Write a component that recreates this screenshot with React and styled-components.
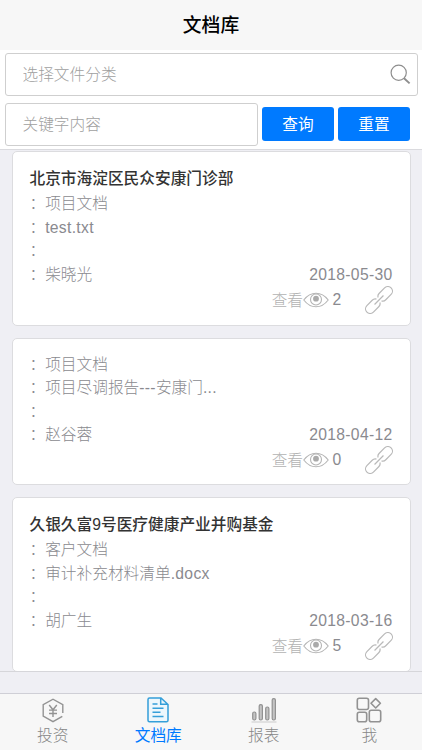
import React from 'react';
import styled, { createGlobalStyle } from 'styled-components';

const GlobalStyle = createGlobalStyle`
  * {
    box-sizing: border-box;
  }

  body {
    margin: 0;
    font-family: "Liberation Sans", "Noto Sans CJK SC", sans-serif;
    font-size: 15.7px;
    color: #8a8a8f;
    background: #efeff4;
  }
`;

const Page = styled.div`
  width: 100%;
  height: 750px;
  display: flex;
  flex-direction: column;
  overflow: hidden;
`;

const Header = styled.header`
  height: 50px;
  flex-shrink: 0;
  background: #f7f7f7;
  color: #000;
  font-size: 18.8px;
  font-weight: 500;
  line-height: 52px;
  text-align: center;
`;

const SearchForm = styled.form`
  height: 100px;
  flex-shrink: 0;
  display: flex;
  flex-direction: column;
  gap: 6.5px;
  padding: 3px 4px 0 5px;
  background: #fff;
  border-bottom: 1px solid #dadade;
`;

const FieldRow = styled.div`
  display: flex;
  align-items: center;
`;

const Field = styled.label`
  width: ${(props) => props.$width};
  height: 43px;
  display: flex;
  align-items: center;
  padding: 1px 6px 0 16.5px;
  border: 1px solid #cfcfcf;
  border-radius: 3px;
  background: #fff;
`;

const Input = styled.input`
  flex: 1;
  min-width: 0;
  padding: 0;
  border: 0;
  outline: 0;
  background: transparent;
  font: inherit;
  font-weight: 300;

  &::placeholder {
    color: #a0a0a0;
    opacity: 1;
  }
`;

const Button = styled.button`
  width: 72px;
  height: 34px;
  margin-left: 4px;
  padding: 0 0 1px;
  border: 0;
  border-radius: 3px;
  background: #007aff;
  color: #fff;
  font: inherit;
`;

const List = styled.main`
  height: 522px;
  flex-shrink: 0;
  display: flex;
  flex-direction: column;
  gap: 12px;
  padding: 1px 11.5px 0 11.5px;
  border-bottom: 1px solid #d6d6da;
  overflow: hidden;
`;

const Card = styled.article`
  flex-shrink: 0;
  height: ${(props) => (props.$titled ? '174.5px' : '147.5px')};
  padding: 14px 17px 0;
  border: 1px solid #dcdcdf;
  border-radius: 5px;
  background: #fff;
`;

const CardTitle = styled.h2`
  margin: 0;
  height: 26.2px;
  line-height: 26px;
  font-size: 15.7px;
  font-weight: 500;
  color: #333;
`;

const CardLine = styled.div`
  height: 23.6px;
  display: flex;
  justify-content: space-between;
  line-height: 23.6px;
  font-weight: 300;
`;

const Latin = styled.span`
  letter-spacing: 0.3px;
`;

const CardFooter = styled.div`
  height: 26px;
  display: flex;
  align-items: center;
  justify-content: flex-end;
  color: #b2b2b2;
  font-weight: 300;

  svg {
    flex-shrink: 0;
  }
`;

const Views = styled.span`
  width: 35.5px;
  padding: 1px 0 0 3.5px;
  color: #8a8a8f;
`;

const TabBar = styled.nav`
  height: 57px;
  margin-top: auto;
  flex-shrink: 0;
  display: flex;
  border-top: 1px solid #cfcfd6;
  background: #f7f7f7;
`;

const Tab = styled.a`
  flex: 1;
  display: flex;
  flex-direction: column;
  align-items: center;
  padding-top: 2px;
  color: ${(props) => (props.$active ? '#007aff' : '#878787')};
  line-height: 24px;
  font-weight: ${(props) => (props.$active ? 400 : 300)};
`;

const documents = [
  {
    title: '北京市海淀区民众安康门诊部',
    type: '项目文档',
    file: 'test.txt',
    author: '柴晓光',
    date: '2018-05-30',
    views: 2,
  },
  {
    type: '项目文档',
    file: '项目尽调报告---安康门...',
    author: '赵谷蓉',
    date: '2018-04-12',
    views: 0,
  },
  {
    title: '久银久富9号医疗健康产业并购基金',
    type: '客户文档',
    file: '审计补充材料清单.docx',
    author: '胡广生',
    date: '2018-03-16',
    views: 5,
  },
];

function SearchIcon() {
  return (
    <svg width="22" height="22" viewBox="0 0 22 22" fill="none" stroke="#8e8e8e">
      <circle cx="9.7" cy="8.7" r="7.6" strokeWidth="1.2" />
      <path d="M15 14.2l5.6 5.2" strokeWidth="1.9" />
    </svg>
  );
}

function EyeIcon() {
  return (
    <svg width="26" height="16" viewBox="0 0 26 16" fill="none" stroke="#b5b5b5" strokeWidth="1.1">
      <path d="M.8 8Q6 1.3 13 1.3T25.2 8Q20 14.8 13 14.8T.8 8z" />
      <circle cx="13" cy="7.5" r="5.5" />
      <circle cx="13" cy="6.7" r="2.9" fill="#aaa" stroke="none" />
    </svg>
  );
}

function LinkIcon() {
  return (
    <svg width="28" height="28" viewBox="0 0 28 28" fill="none" stroke="#b9b9b9" strokeWidth="1.2">
      <g transform="translate(14 14) rotate(-45)">
        <path d="M1.2 -2.4Q2.200 -4.600 5 -4.600H12.500a4.600 4.600 0 0 1 0 9.200H5Q2.200 4.600 1.200 2.400" />
        <path d="M-1.200 -2.400Q-2.200 -4.600 -5 -4.600H-12.500a4.600 4.600 0 0 0 0 9.200H-5Q-2.200 4.600 -1.200 2.400" />
        <path d="M-6.300 0H6.300" />
      </g>
    </svg>
  );
}

function InvestIcon() {
  return (
    <svg width="24" height="28" viewBox="0 0 24 28" fill="none" stroke="#939393" strokeWidth="1.4">
      <path d="M21.8 17V8.6L12 3.200 2.200 8.600v11.400L12 25.600l9.300-5.200" />
      <path d="M8.200 9l3.800 4.800L15.800 9M12 13.800V21M8 14.100h8M8 17.500h8" />
    </svg>
  );
}

function DocumentIcon() {
  return (
    <svg width="24" height="28" viewBox="0 0 24 28" fill="#edf7fc" stroke="#359fd9" strokeWidth="1.5">
      <path d="M15 2H3.500Q2 2 2 3.500v20.800q0 1.500 1.500 1.500h17q1.500 0 1.500-1.500V8.500zM14.700 2.300v6h7" />
      <path d="M6.500 8h5M6.500 12.200h11M6.500 16.200h8M6.500 20.500h11" />
    </svg>
  );
}

function ReportIcon() {
  return (
    <svg width="26" height="28" viewBox="0 0 26 28" fill="#c4c4c4" stroke="#929292" strokeWidth="1.2">
      <rect x="1.7" y="16" width="3.2" height="8" rx="1.5" />
      <rect x="8.2" y="8.6" width="3.2" height="15.4" rx="1.5" />
      <rect x="14.7" y="11" width="3.2" height="13" rx="1.5" />
      <rect x="21.2" y="2.6" width="3.2" height="21.4" rx="1.5" />
      <path d="M.5 26h25" stroke="#d2d2d2" />
    </svg>
  );
}

function ProfileIcon() {
  return (
    <svg width="26" height="28" viewBox="0 0 26 28" fill="none" stroke="#929292" strokeWidth="1.6">
      <rect x="1.3" y="2.3" width="11.2" height="11.200" rx="2" />
      <rect x="1.3" y="16.300" width="9.400" height="9.400" rx="2" />
      <rect x="13.300" y="14.300" width="11.400" height="11.400" rx="2" />
      <path d="M19.700 2.600l4.700 4.700-4.700 4.700L15 7.300z" strokeLinejoin="round" />
    </svg>
  );
}

// Latin runs are tracked a little wider than the Chinese text around them
function FileName({ name }) {
  return (
    <span>
      ：
      {name.split(/([ -~]+)/).map((part, i) => (i % 2 ? <Latin key={i}>{part}</Latin> : part))}
    </span>
  );
}

function DocumentCard({ doc }) {
  return (
    <Card $titled={Boolean(doc.title)}>
      {doc.title && <CardTitle>{doc.title}</CardTitle>}
      <CardLine>：{doc.type}</CardLine>
      <CardLine>
        <FileName name={doc.file} />
      </CardLine>
      <CardLine>：</CardLine>
      <CardLine>
        <span>：{doc.author}</span>
        <Latin>{doc.date}</Latin>
      </CardLine>
      <CardFooter>
        <span>查看</span>
        <EyeIcon />
        <Views>{doc.views}</Views>
        <LinkIcon />
      </CardFooter>
    </Card>
  );
}

function App() {
  return (
    <Page>
      <GlobalStyle />
      <Header>文档库</Header>
      <SearchForm>
        <Field $width="413px">
          <Input placeholder="选择文件分类" />
          <SearchIcon />
        </Field>
        <FieldRow>
          <Field $width="253px">
            <Input placeholder="关键字内容" />
          </Field>
          <Button type="button">查询</Button>
          <Button type="button">重置</Button>
        </FieldRow>
      </SearchForm>
      <List>
        {documents.map((doc) => (
          <DocumentCard key={doc.date} doc={doc} />
        ))}
      </List>
      <TabBar>
        <Tab>
          <InvestIcon />
          投资
        </Tab>
        <Tab $active>
          <DocumentIcon />
          文档库
        </Tab>
        <Tab>
          <ReportIcon />
          报表
        </Tab>
        <Tab>
          <ProfileIcon />
          我
        </Tab>
      </TabBar>
    </Page>
  );
}

export default App;
